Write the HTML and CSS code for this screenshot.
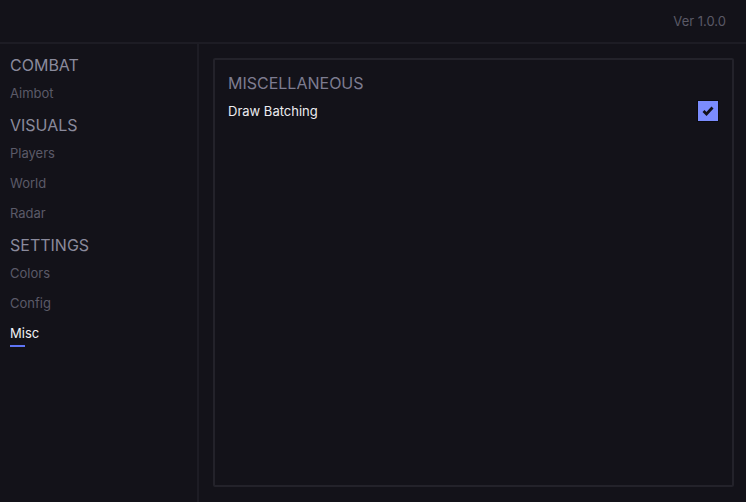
FILE: index.html
```html
<!DOCTYPE html>
<html lang="en">
<head>
    <meta charset="UTF-8">
    <title>Menu</title>
    <link rel="stylesheet" href="styles.css">
</head>
<body>

<div class="topbar">
    <span class="version">Ver 1.0.0</span>
</div>

<div class="layout">
    <div class="sidebar">
        <div class="category">COMBAT</div>
        <div class="nav-item">Aimbot</div>

        <div class="category">VISUALS</div>
        <div class="nav-item">Players</div>
        <div class="nav-item">World</div>
        <div class="nav-item">Radar</div>

        <div class="category">SETTINGS</div>
        <div class="nav-item">Colors</div>
        <div class="nav-item">Config</div>
        <div class="nav-item active">Misc</div>
    </div>

    <div class="content">
        <div class="panel">
            <h2>MISCELLANEOUS</h2>
            <div class="option">
                <span>Draw Batching</span>
                <div class="checkbox checked">
                    <svg width="12" height="10" viewBox="0 0 12 10">
                        <path d="M1.5 5 L4.5 8 L10.5 1.5" fill="none" stroke="#121117" stroke-width="2.8"/>
                    </svg>
                </div>
            </div>
        </div>
    </div>
</div>

</body>
</html>
```

FILE: styles.css
```css
html, body {
    height: 100%;
}
body {
    margin: 0;
    background-color: #131219;
    font-family: Inter, "Noto Sans", sans-serif;
    display: flex;
    flex-direction: column;
}
.topbar {
    height: 42px;
    border-bottom: 2px solid #1d1c24;
    display: flex;
    align-items: center;
    justify-content: flex-end;
    padding-right: 20px;
}
.version {
    color: #5a5966;
    font-size: 13px;
}
.layout {
    flex: 1;
    display: flex;
}
.sidebar {
    width: 199px;
    border-right: 2px solid #1d1c24;
    padding: 11px 0 0 10px;
    box-sizing: border-box;
}
.category {
    color: #8a8a9c;
    font-size: 16px;
    line-height: 20px;
    margin-top: 7px;
    margin-bottom: 3px;
}
.category:first-child {
    margin-top: 0;
}
.nav-item {
    color: #5b5a68;
    font-size: 13px;
    line-height: 20px;
    padding: 5px 0;
}
.nav-item.active {
    color: #f0f0f4;
}
.nav-item.active::after {
    content: "";
    display: block;
    width: 15px;
    height: 2px;
    margin-top: 2px;
    margin-bottom: -4px;
    background-color: #5f74f5;
}
.content {
    flex: 1;
    padding: 14px 12px 15px 14px;
    display: flex;
}
.panel {
    flex: 1;
    border: 2px solid #23222a;
    border-radius: 2px;
    padding: 12px 13px 0 13px;
}
.panel h2 {
    margin: 0 0 6px 0;
    font-weight: normal;
    font-size: 16px;
    line-height: 22px;
    color: #7d7c90;
}
.option {
    display: flex;
    align-items: center;
    justify-content: space-between;
    height: 22px;
    color: #ececf0;
    font-size: 13px;
}
.checkbox {
    width: 20px;
    height: 20px;
    border: 1px solid #0b0b0f;
    display: flex;
    align-items: center;
    justify-content: center;
}
.checkbox.checked {
    background-color: #7b8cfd;
}
```
